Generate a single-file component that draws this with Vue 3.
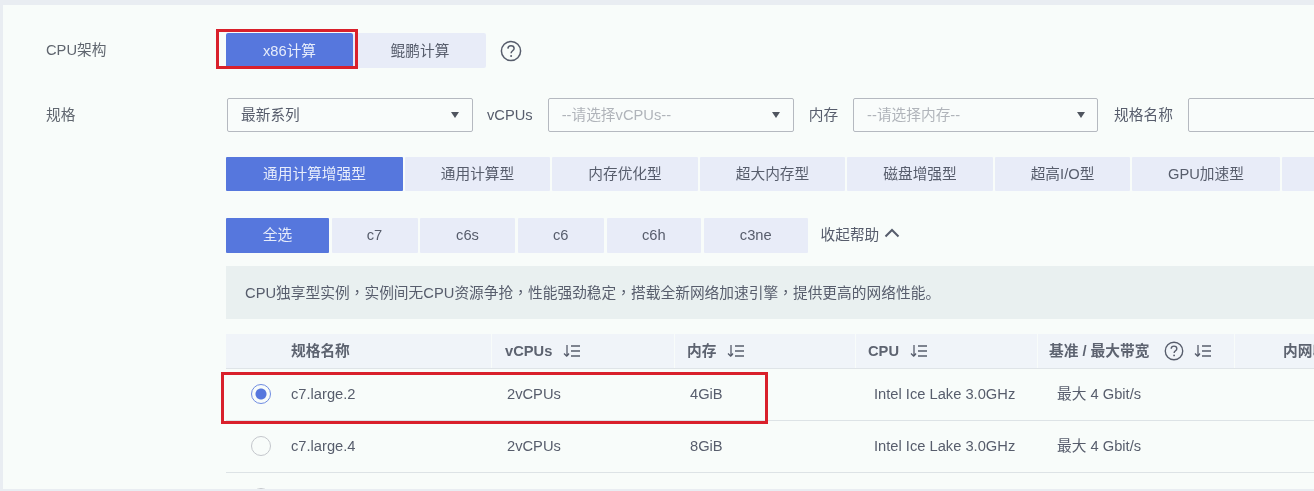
<script setup>
const types = ['通用计算增强型', '通用计算型', '内存优化型', '超大内存型', '磁盘增强型', '超高I/O型', 'GPU加速型', '']
const series = ['全选', 'c7', 'c6s', 'c6', 'c6h', 'c3ne']
const rows = [
  { name: 'c7.large.2', cpu: '2vCPUs', mem: '4GiB', on: true },
  { name: 'c7.large.4', cpu: '2vCPUs', mem: '8GiB', on: false }
]
</script>

<template>
  <main class="card">
    <section class="line arch">
      <div class="label">CPU架构</div>
      <div class="body flex">
        <button class="seg seg-a active">x86计算</button>
        <button class="seg seg-b">鲲鹏计算</button>
        <svg class="help" width="22" height="22" viewBox="0 0 22 22">
          <circle cx="11" cy="11" r="9.6" fill="none" stroke="#575d6c" stroke-width="1.5" />
          <path d="M7.9 8.6c.1-1.8 1.4-2.9 3.1-2.9 1.8 0 3.1 1.1 3.1 2.7 0 2.4-3 2.4-3 4.9" fill="none" stroke="#575d6c" stroke-width="1.5" />
          <circle cx="11.1" cy="15.9" r="1" fill="#575d6c" />
        </svg>
      </div>
    </section>

    <section class="line filters">
      <div class="label">规格</div>
      <div class="body flex">
        <div class="select s1"><span>最新系列</span><i class="caret"></i></div>
        <span class="flabel l1">vCPUs</span>
        <div class="select s2"><span class="ph">--请选择vCPUs--</span><i class="caret"></i></div>
        <span class="flabel l2">内存</span>
        <div class="select s3"><span class="ph">--请选择内存--</span><i class="caret"></i></div>
        <span class="flabel l3">规格名称</span>
        <div class="select s4"></div>
      </div>
    </section>

    <section class="line types">
      <div></div>
      <div class="body tabs type-tabs">
        <button v-for="(t, i) in types" :key="i" class="tab" :class="{ active: i === 0 }">{{ t }}</button>
      </div>
    </section>

    <section class="line series">
      <div></div>
      <div class="body tabs series-tabs">
        <button v-for="(t, i) in series" :key="t" class="tab" :class="{ active: i === 0 }">{{ t }}</button>
        <span class="collapse">收起帮助
          <svg width="16" height="10" viewBox="0 0 16 10"><path d="M1.5 8.500 8 2l6.500 6.500" fill="none" stroke="#575d6c" stroke-width="2" /></svg>
        </span>
      </div>
    </section>

    <section class="line info-line">
      <div></div>
      <div class="body info">CPU独享型实例<span class="cm">，</span>实例间无CPU资源争抢<span class="cm">，</span>性能强劲稳定<span class="cm">，</span>搭载全新网络加速引擎<span class="cm">，</span>提供更高的网络性能。</div>
    </section>

    <section class="line table-line">
      <div></div>
      <div class="body table">
        <div class="grid head">
          <div class="h h0">规格名称</div>
          <div class="h h1">vCPUs
            <svg class="sort" width="19" height="14" viewBox="0 0 19 14"><path d="M5 1v11M2 9.500 5 12.500M7 9.500 5 12M9 2h9M9 7h9M9 12h9" fill="none" stroke="#575d6c" stroke-width="1.300" /></svg>
          </div>
          <div class="h h2">内存
            <svg class="sort" width="19" height="14" viewBox="0 0 19 14"><path d="M5 1v11M2 9.500 5 12.500M7 9.500 5 12M9 2h9M9 7h9M9 12h9" fill="none" stroke="#575d6c" stroke-width="1.300" /></svg>
          </div>
          <div class="h h3">CPU
            <svg class="sort" width="19" height="14" viewBox="0 0 19 14"><path d="M5 1v11M2 9.500 5 12.500M7 9.500 5 12M9 2h9M9 7h9M9 12h9" fill="none" stroke="#575d6c" stroke-width="1.300" /></svg>
          </div>
          <div class="h h4">基准 / 最大带宽
            <svg class="qmark" width="20" height="20" viewBox="0 0 22 22">
              <circle cx="11" cy="11" r="9.600" fill="none" stroke="#575d6c" stroke-width="1.500" />
              <path d="M7.900 8.600c.1-1.800 1.400-2.900 3.100-2.900 1.800 0 3.100 1.100 3.100 2.700 0 2.400-3 2.400-3 4.900" fill="none" stroke="#575d6c" stroke-width="1.500" />
              <circle cx="11.100" cy="15.900" r="1" fill="#575d6c" />
            </svg>
            <svg class="sort2" width="19" height="14" viewBox="0 0 19 14"><path d="M5 1v11M2 9.500 5 12.500M7 9.500 5 12M9 2h9M9 7h9M9 12h9" fill="none" stroke="#575d6c" stroke-width="1.300" /></svg>
          </div>
          <div class="h h5">内网收发包</div>
        </div>

        <div v-for="r in rows" :key="r.name" class="grid row">
          <div class="c c0"><span class="radio" :class="{ on: r.on }"></span>{{ r.name }}</div>
          <div class="c c1">{{ r.cpu }}</div>
          <div class="c c2">{{ r.mem }}</div>
          <div class="c c3">Intel Ice Lake 3.0GHz</div>
          <div class="c c4">最大 4 Gbit/s</div>
          <div class="c"></div>
        </div>
        <div class="grid row">
          <div class="c c0"><span class="radio"></span></div>
        </div>
      </div>
    </section>

    <div class="mark mark-arch"></div>
    <div class="mark mark-row"></div>
  </main>
</template>

<style>
html, body { margin: 0; background: #e9edf2; overflow: hidden; }
</style>

<style scoped>
.card {
  position: relative;
  box-sizing: border-box;
  width: 1311px;
  height: 484px;
  margin: 5px 0 0 3px;
  overflow: hidden;
  background: #f8fcfa;
  color: #575d6c;
  font: 14.7px/20px "Liberation Sans", "Noto Sans CJK SC", sans-serif;
  filter: blur(0.5px);
}
.line { display: grid; grid-template-columns: 223px 1088px; }
.arch { padding-top: 28px; }
.filters { margin-top: 30px; }
.types { margin-top: 25px; }
.series { margin-top: 27px; }
.info-line { margin-top: 13px; }
.table-line { margin-top: 15px; }
.label { padding-left: 43px; line-height: 34px; color: #60666f; }
.flex { display: flex; align-items: center; }
button { border: 0; padding: 0; font: inherit; color: inherit; background: #e8ecf8; white-space: nowrap; }

.seg { height: 35px; border-radius: 2px; }
.seg-a { width: 127px; }
.seg-b { width: 133px; padding-left: 1px; }
.active { background: #5677dd; color: #e6ecfb; }
.help { margin-left: 14px; }

.select {
  box-sizing: border-box;
  display: flex;
  align-items: center;
  justify-content: space-between;
  height: 34px;
  padding: 0 13px;
  flex: none;
  background: #f9fcfb;
  border: 1px solid #b5b9c0;
  border-radius: 2px;
}
.s1 { width: 246px; margin-left: 1px; }
.s2 { width: 246px; }
.s3 { width: 245px; }
.s3 .caret { margin-right: -1px; }
.s4 { width: 200px; }
.ph { color: #b0b4ba; }
.caret {
  width: 0;
  height: 0;
  border-left: 4.500px solid transparent;
  border-right: 4.500px solid transparent;
  border-top: 6px solid #50555f;
}
.flabel { flex: none; }
.l1 { margin: 0 15px 0 14px; }
.l2 { margin: 0 15px; }
.l3 { margin: 0 15px 0 16px; }

.tabs { display: flex; }
.tab { flex: none; height: 34px; border-radius: 1px; }
.type-tabs { gap: 2px; }
.type-tabs .tab:nth-child(1) { width: 177px; }
.type-tabs .tab:nth-child(2) { width: 145px; }
.type-tabs .tab:nth-child(3) { width: 146px; }
.type-tabs .tab:nth-child(4) { width: 145px; }
.type-tabs .tab:nth-child(5) { width: 146px; }
.type-tabs .tab:nth-child(6) { width: 135px; }
.type-tabs .tab:nth-child(7) { width: 148px; }
.type-tabs .tab:nth-child(8) { width: 100px; }

.series-tabs { gap: 2.5px; align-items: flex-start; }
.series-tabs .tab { height: 35px; padding-bottom: 2px; }
.series-tabs .tab:nth-child(1) { width: 103px; }
.series-tabs .tab:nth-child(2) { width: 86px; }
.series-tabs .tab:nth-child(3) { width: 95px; }
.series-tabs .tab:nth-child(4) { width: 86.5px; }
.series-tabs .tab:nth-child(5) { width: 94.5px; }
.series-tabs .tab:nth-child(6) { width: 104.5px; }
.collapse { display: flex; align-items: center; gap: 5px; height: 33px; margin-left: 10px; }
.collapse svg { margin-top: -3px; }

.info {
  box-sizing: border-box;
  height: 53px;
  padding-left: 19px;
  line-height: 51px;
  background: #e9f0f0;
  white-space: nowrap;
  letter-spacing: 0.03px;
}
.cm { font-family: "Noto Sans CJK TC", sans-serif; }

.grid { display: grid; grid-template-columns: 265px 183px 181px 182px 197px 1fr; }
.head { height: 35px; box-sizing: border-box; border-bottom: 1px solid #dfe4e8; }
.h {
  display: flex;
  align-items: center;
  font-weight: 700;
  color: #5d6370;
  background: #f0f4f9;
  border-left: 1px solid #f8fcfa;
  white-space: nowrap;
  overflow: hidden;
}
.h0 { padding-left: 65px; border-left: 0; }
.h1 { padding-left: 13px; }
.h2 { padding-left: 12px; }
.h3 { padding-left: 12px; }
.h4 { padding-left: 11px; }
.h5 { padding-left: 48px; }
.sort { margin-left: 10px; }
.qmark { margin-left: 15px; }
.sort2 { margin-left: 9px; }

.row { height: 52px; box-sizing: border-box; padding-bottom: 1px; border-bottom: 1px solid #dde3e6; }
.c { display: flex; align-items: center; white-space: nowrap; }
.c0 { padding-left: 25px; }
.c1, .c2 { padding-left: 16px; }
.c3 { padding-left: 19px; }
.c4 { padding-left: 20px; }
.radio {
  box-sizing: border-box;
  flex: none;
  width: 20px;
  height: 20px;
  margin-right: 20px;
  border: 1.500px solid #c4c7cc;
  border-radius: 50%;
  background: #f8fcfa;
}
.radio.on {
  border-color: #6f8ce2;
  background: radial-gradient(circle, #5677dd 0 5px, #f8fcfa 6px);
}

.mark { position: absolute; box-sizing: border-box; border: 3px solid #d9202b; pointer-events: none; }
.mark-arch { left: 213px; top: 24px; width: 142px; height: 40px; }
.mark-row { left: 218px; top: 367px; width: 547px; height: 52px; }
</style>
